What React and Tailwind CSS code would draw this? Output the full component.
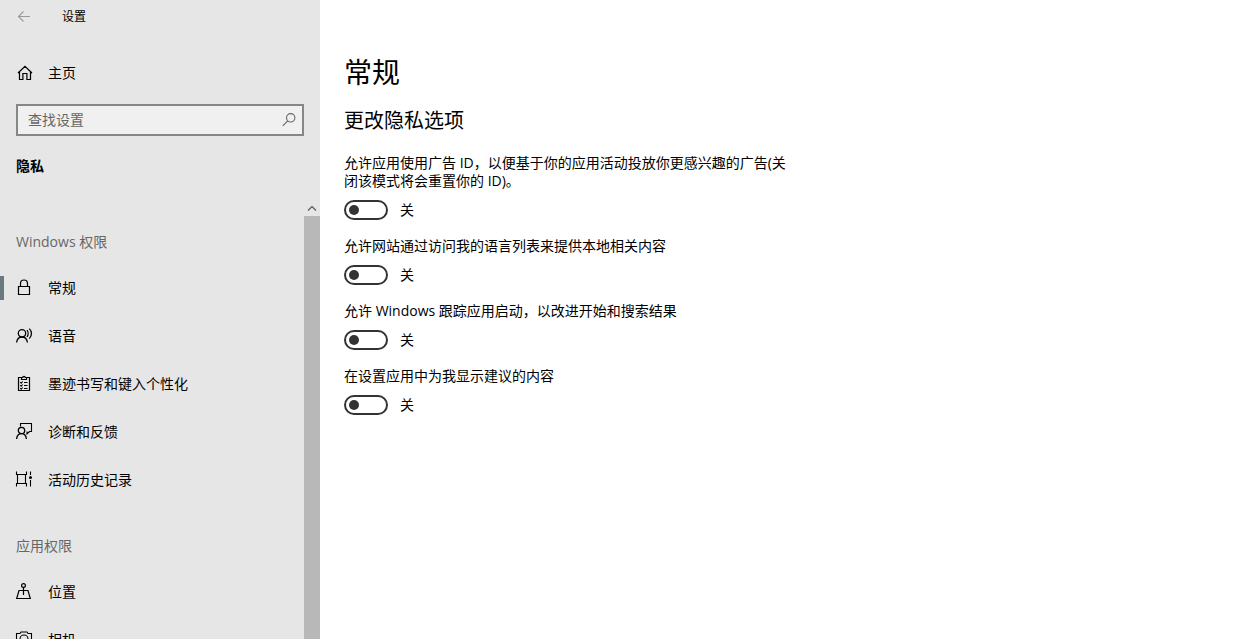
import { useState } from 'react'

function Icon({ children, className = '' }) {
  return (
    <svg
      width="16"
      height="16"
      viewBox="0 0 16 16"
      fill="none"
      stroke="currentColor"
      strokeWidth="1.1"
      aria-hidden="true"
      className={`shrink-0 overflow-visible ${className}`}
    >
      {children}
    </svg>
  )
}

const BackIcon = () => (
  <Icon className="text-[#999999]">
    <path d="M14 7.5H2.5M7.5 2.5l-5 5 5 5" />
  </Icon>
)

const HomeIcon = () => (
  <Icon>
    <path d="M2 8 9 1.3 16 8M3.5 6.8v7.7h3.4V8.5h4v6h3.6V6.8" strokeWidth="1.2" />
  </Icon>
)

const SearchIcon = () => (
  <Icon className="text-[#666666]">
    <circle cx="9.7" cy="5.8" r="4.2" />
    <path d="M6.7 8.9 1.8 13.8" />
  </Icon>
)

const LockIcon = () => (
  <Icon>
    <path d="M2.5 6.5h11v8h-11zM4.5 6.5V3.5a3.5 3.5 0 0 1 7 0v3" strokeWidth="1.2" />
  </Icon>
)

const SpeechIcon = () => (
  <Icon>
    <circle cx="6" cy="5.3" r="3.7" strokeWidth="1.3" />
    <path d="M.6 14.5C1 11.2 3.200 9 6 9s5 2.200 5.400 5.500M11 2.200c1.500 1.800 1.500 4.800 0 6.600M13.300.6c2.900 2.900 2.900 7.100 0 10" strokeWidth="1.3" />
  </Icon>
)

const ClipboardIcon = () => (
  <Icon>
    <path d="M5.500 1.500h-3v13h11v-13h-3M5.500 3.500v-2h1.300a1.200 1.200 0 0 1 2.400 0h1.300v2z" strokeWidth="1.2" />
    <path d="M8 6.500h3.500M8 9.500h3.500M8 12.500h3.500M4.200 6.200l1 1 1.500-1.700M4.200 9.200l1 1 1.500-1.700M4.200 12.200l1 1 1.500-1.700" />
  </Icon>
)

const FeedbackIcon = () => (
  <Icon>
    <circle cx="5.500" cy="6.500" r="3.200" strokeWidth="1.3" />
    <path d="M.6 15c.3-3.200 2.300-5.300 4.900-5.300s4.600 2.100 4.900 5.300" strokeWidth="1.3" />
    <path d="M4.500 2.500v-3h11v8h-2l-2.500 2.500V7.500" />
  </Icon>
)

const HistoryIcon = () => (
  <Icon>
    <path d="M0 2.500h11M0 11.500h11M1.500 2.500v9M9.500 2.500v9M.5-.5v3M10.500-.5v3M.5 11.500v3M10.500 11.500v3M14.500-.5V3M14.500 8v6.500" />
    <circle cx="14.500" cy="5.500" r="1.500" fill="currentColor" stroke="none" />
  </Icon>
)

const LocationIcon = () => (
  <Icon>
    <circle cx="7.500" cy="1.500" r="1.900" strokeWidth="1.2" />
    <path d="M7.500 3.400v7.600M4.500 6.500H3L.7 14.500h13.600L12 6.500h-1.500M4.500 6.500h6" strokeWidth="1.2" />
  </Icon>
)

const CameraIcon = () => (
  <Icon>
    <path d="M.5 1.500H4l1-1.500h6l1 1.500h3.500v12H.5z" />
    <circle cx="8" cy="7" r="4" />
  </Icon>
)

const GROUPS = [
  {
    title: 'Windows 权限',
    items: [
      { label: '常规', icon: LockIcon },
      { label: '语音', icon: SpeechIcon },
      { label: '墨迹书写和键入个性化', icon: ClipboardIcon },
      { label: '诊断和反馈', icon: FeedbackIcon },
      { label: '活动历史记录', icon: HistoryIcon },
    ],
  },
  {
    title: '应用权限',
    items: [
      { label: '位置', icon: LocationIcon },
      { label: '相机', icon: CameraIcon },
    ],
  },
]

const OPTIONS = [
  { id: 'ad-id', label: '允许应用使用广告 ID，以便基于你的应用活动投放你更感兴趣的广告(关闭该模式将会重置你的 ID)。' },
  { id: 'language', label: '允许网站通过访问我的语言列表来提供本地相关内容' },
  { id: 'launch', label: '允许 Windows 跟踪应用启动，以改进开始和搜索结果' },
  { id: 'suggest', label: '在设置应用中为我显示建议的内容' },
]

function Toggle({ id, label }) {
  const [on, setOn] = useState(false)

  return (
    <div>
      <label htmlFor={id} className="block">{label}</label>
      <div className="mt-[10px] flex h-5 items-center gap-3">
        <input
          id={id}
          type="checkbox"
          role="switch"
          checked={on}
          onChange={e => setOn(e.target.checked)}
          className="flex h-5 w-11 appearance-none items-center rounded-full border-2 border-[#333333] px-[3px] before:size-[10px] before:rounded-full before:bg-[#333333] checked:justify-end checked:border-[#69797e] checked:bg-[#69797e] checked:before:bg-white"
        />
        <span className="leading-5">{on ? '开' : '关'}</span>
      </div>
    </div>
  )
}

function Sidebar() {
  const [active, setActive] = useState('常规')

  return (
    <aside className="flex w-80 shrink-0 flex-col bg-[#e6e6e6]">
      {/* Title bar */}
      <header className="flex h-[34px] shrink-0 items-center px-4 text-xs">
        <button type="button" aria-label="返回" className="mr-[30px]">
          <BackIcon />
        </button>
        设置
      </header>

      <a href="#home" className="mt-[15px] flex h-12 shrink-0 items-center gap-4 px-4">
        <HomeIcon />
        主页
      </a>

      {/* Search */}
      <div className="mx-4 mt-[7px] flex h-8 shrink-0 items-center border-2 border-[#868686] bg-[#f0f0f0] pr-[5px] pl-[10px]">
        <input
          type="text"
          aria-label="查找设置"
          placeholder="查找设置"
          className="min-w-0 flex-1 bg-transparent outline-none placeholder:text-[#666666]"
        />
        <button type="button" aria-label="搜索">
          <SearchIcon />
        </button>
      </div>

      <h2 className="mt-5 px-4 leading-5 font-bold">隐私</h2>

      {/* Categories and their scroll bar */}
      <div className="mt-6 flex min-h-0 flex-1">
        <nav className="min-w-0 flex-1 overflow-hidden pt-8">
          {GROUPS.map(group => (
            <section key={group.title} className="mb-8">
              <h3 className="mb-3 px-4 leading-5 text-[#666666]">{group.title}</h3>
              {group.items.map(({ label, icon: ItemIcon }) => (
                <a
                  key={label}
                  href={`#${label}`}
                  onClick={() => setActive(label)}
                  className="flex h-12 items-center"
                >
                  <span className={`mr-3 h-6 w-1 ${active === label ? 'bg-[#69797e]' : ''}`} />
                  <ItemIcon />
                  <span className="ml-4">{label}</span>
                </a>
              ))}
            </section>
          ))}
        </nav>
        <div className="flex w-4 flex-col">
          <button type="button" aria-label="向上滚动" className="h-4 shrink-0 text-[#555555]">
            <Icon>
              <path d="M4 10.500 8 6.500l4 4" />
            </Icon>
          </button>
          <div className="flex-1 bg-[#b8b8b8]" />
        </div>
      </div>
    </aside>
  )
}

export default function App() {
  return (
    <div className="flex h-screen overflow-hidden bg-white font-['Open_Sans','Noto_Sans_CJK_SC',sans-serif] text-sm text-black" lang="zh-CN">
      <Sidebar />
      <main className="min-w-0 flex-1 px-6 pt-[52px]">
        <h1 className="text-[28px] leading-10">常规</h1>
        <h2 className="mt-[13px] text-xl leading-8">更改隐私选项</h2>
        <div className="mt-[17px] flex max-w-[448px] flex-col gap-[17px] leading-[18px]">
          {OPTIONS.map(option => (
            <Toggle key={option.id} {...option} />
          ))}
        </div>
      </main>
    </div>
  )
}
